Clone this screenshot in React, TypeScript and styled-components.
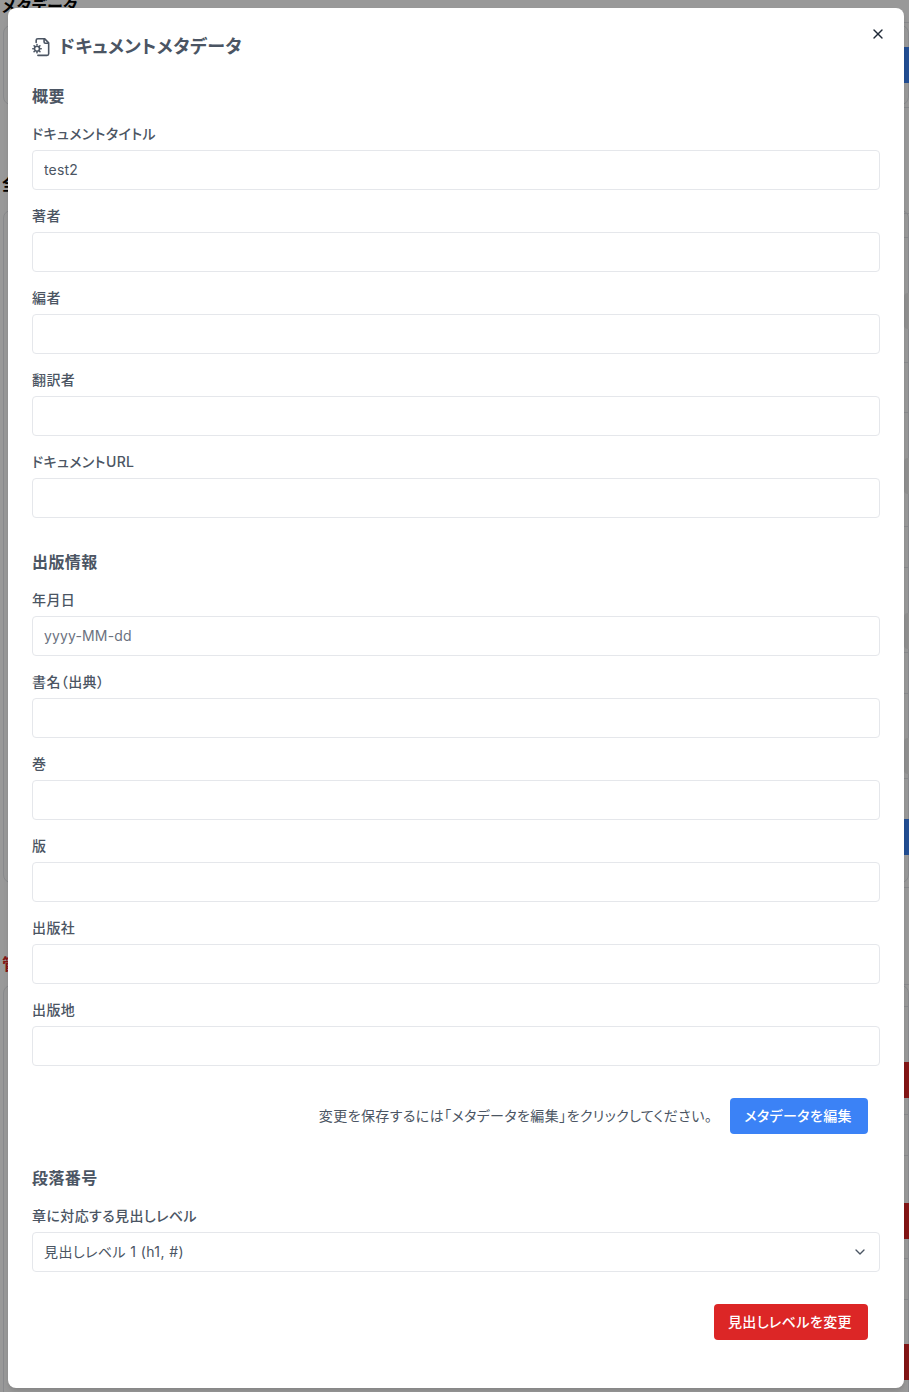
import styled, { createGlobalStyle } from 'styled-components';
import { ChevronDown, X } from 'lucide-react';

const GlobalStyle = createGlobalStyle`
  html, body {
    margin: 0;
    padding: 0;
    background: #fff;
  }
  body {
    font-family: Inter, "Noto Sans CJK JP", sans-serif;
    font-feature-settings: "palt";
    letter-spacing: 0.025em;
    overflow: hidden;
  }
  * {
    box-sizing: border-box;
  }
`;

const Page = styled.div`
  position: relative;
  width: 909px;
  height: 1392px;
  overflow: hidden;
  background: #fff;
`;

// 背面のページ（モーダルの外側に少しだけ見える部分）
const BackPage = styled.div`
  display: flex;
  flex-direction: column;
  height: 100%;
  padding: 0 0 0 3px;
`;

const BackHeading = styled.h2<{ $top: number; $danger?: boolean }>`
  flex-shrink: 0;
  margin: ${(p) => p.$top}px 0 0 -1px;
  height: 12px;
  font-size: 16px;
  line-height: 12px;
  font-weight: 700;
  color: ${(p) => (p.$danger ? '#dc2626' : '#000')};
`;

const BackCard = styled.div<{ $top: number; $height: number }>`
  flex-shrink: 0;
  margin-top: ${(p) => p.$top}px;
  height: ${(p) => p.$height}px;
  border: 1px solid #e5e7eb;
  border-radius: 8px;
`;

const BackRail = styled.div`
  position: absolute;
  top: 0;
  bottom: 0;
  right: 0;
  width: 5px;
`;

const RailLine = styled.div<{ $y: number }>`
  position: absolute;
  left: 0;
  right: 0;
  top: ${(p) => p.$y}px;
  height: 1px;
  background: #e5e7eb;
`;

const RailButton = styled.div<{ $y: number; $color: string }>`
  position: absolute;
  left: 0;
  right: 0;
  top: ${(p) => p.$y}px;
  height: 36px;
  background: ${(p) => p.$color};
`;

const RailMuted = styled.div<{ $y: number }>`
  position: absolute;
  left: 0;
  right: 0;
  top: ${(p) => p.$y}px;
  height: 36px;
  border-radius: 4px 0 0 4px;
  background: #eeeeee;
`;

const Backdrop = styled.div`
  position: absolute;
  inset: 0;
  background: rgba(0, 0, 0, 0.4);
`;

const Modal = styled.div`
  position: absolute;
  top: 8px;
  left: 8px;
  width: 896px;
  height: 1380px;
  padding: 24px;
  background: #fff;
  border-radius: 8px;
  box-shadow: 0 4px 6px -1px rgba(0, 0, 0, 0.1), 0 2px 4px -1px rgba(0, 0, 0, 0.06);
  color: #4b5563;
`;

const CloseButton = styled.button`
  position: absolute;
  top: 16px;
  right: 16px;
  width: 20px;
  height: 20px;
  padding: 0;
  display: flex;
  align-items: center;
  justify-content: center;
  border: 0;
  background: transparent;
  color: #1f2937;
`;

const Title = styled.h1`
  display: flex;
  align-items: center;
  gap: 7px;
  margin: 1px 0 23px;
  height: 28px;
  font-size: 18px;
  line-height: 28px;
  font-weight: 600;
  color: #4b5563;
`;

const Section = styled.section<{ $top?: number }>`
  display: flex;
  flex-direction: column;
  margin-top: ${(p) => p.$top ?? 0}px;
`;

const SectionTitle = styled.h2`
  margin: 0 0 16px;
  font-size: 16px;
  line-height: 24px;
  font-weight: 600;
  color: #4b5563;
`;

const Field = styled.div`
  display: flex;
  flex-direction: column;
  margin-bottom: 16px;
`;

const Label = styled.label`
  display: block;
  margin-bottom: 7px;
  font-size: 14px;
  line-height: 19px;
  font-weight: 500;
  color: #4b5563;
`;

const Input = styled.input`
  display: block;
  width: 100%;
  height: 40px;
  padding: 0 11px 1px;
  border: 1px solid #e5e7eb;
  border-radius: 4px;
  background: #fff;
  font-family: inherit;
  font-feature-settings: inherit;
  letter-spacing: 0.01em;
  font-size: 14px;
  color: #4b5563;
  outline: none;

  &::placeholder {
    color: #6b7280;
    opacity: 1;
  }
`;

const SelectBox = styled.div`
  display: flex;
  align-items: center;
  justify-content: space-between;
  height: 40px;
  padding: 0 11px;
  border: 1px solid #e5e7eb;
  border-radius: 4px;
  font-size: 14px;
  color: #4b5563;
`;

const SelectValue = styled.span`
  padding-bottom: 2px;
`;

const Actions = styled.div<{ $top: number; $bottom: number }>`
  display: flex;
  align-items: center;
  justify-content: flex-end;
  gap: 18px;
  margin: ${(p) => p.$top}px 12px ${(p) => p.$bottom}px 0;
  font-size: 14px;
  color: #4b5563;
`;

const ActionNote = styled.span`
  padding-bottom: 2px;
`;

const ActionButton = styled.button<{ $color: string }>`
  height: 36px;
  padding: 0 16px 2px 14px;
  border: 0;
  border-radius: 4px;
  background: ${(p) => p.$color};
  font-family: inherit;
  font-feature-settings: inherit;
  letter-spacing: inherit;
  font-size: 14px;
  font-weight: 500;
  color: #fff;
`;

const MetaIcon = () => (
  <svg width="20" height="20" viewBox="0 0 24 24" fill="none" stroke="currentColor" strokeWidth="1.9" strokeLinecap="round" strokeLinejoin="round">
    <path d="M5 6.5V4a2 2 0 0 1 2-2h8l5 5v13a2 2 0 0 1-2 2H7" />
    <path d="M14.5 2.5V6a1.5 1.5 0 0 0 1.5 1.5h3.5" />
    <circle cx="6" cy="14" r="3" />
    <path d="M6 9v.6M6 18.4v.6M1 14h.6M10.4 14h.6M2.5 10.5l.4.4M9.1 17.1l.4.4M2.5 17.5l.4-.4M9.1 10.9l.4-.4" />
  </svg>
);

const overview = ['ドキュメントタイトル', '著者', '編者', '翻訳者', 'ドキュメントURL'];
const publication = ['年月日', '書名（出典）', '巻', '版', '出版社', '出版地'];

const railLines = [22, 107, 213, 237, 362, 412, 526, 567, 652, 693, 778, 887, 984, 1006, 1114, 1155, 1258, 1299];

export default function App() {
  return (
    <Page>
      <GlobalStyle />
      <BackPage>
        <BackHeading $top={0}>メタデータ</BackHeading>
        <BackCard $top={13} $height={80} />
        <BackHeading $top={73}>全</BackHeading>
        <BackCard $top={20} $height={673} />
        <BackHeading $top={75} $danger>管</BackHeading>
        <BackCard $top={15} $height={420} />
      </BackPage>
      <BackRail>
        {railLines.map((y) => (
          <RailLine key={y} $y={y} />
        ))}
        <RailButton $y={47} $color="#3b82f6" />
        <RailMuted $y={293} />
        <RailMuted $y={458} />
        <RailMuted $y={613} />
        <RailMuted $y={738} />
        <RailButton $y={819} $color="#3b82f6" />
        <RailButton $y={1062} $color="#dc2626" />
        <RailButton $y={1203} $color="#dc2626" />
        <RailButton $y={1344} $color="#dc2626" />
      </BackRail>
      <Backdrop />
      <Modal>
        <CloseButton aria-label="閉じる">
          <X size={16} />
        </CloseButton>
        <Title>
          <MetaIcon />
          ドキュメントメタデータ
        </Title>
        <Section>
          <SectionTitle>概要</SectionTitle>
          {overview.map((label, i) => (
            <Field key={label}>
              <Label>{label}</Label>
              <Input defaultValue={i === 0 ? 'test2' : ''} />
            </Field>
          ))}
        </Section>
        <Section $top={16}>
          <SectionTitle>出版情報</SectionTitle>
          {publication.map((label, i) => (
            <Field key={label}>
              <Label>{label}</Label>
              <Input placeholder={i === 0 ? 'yyyy-MM-dd' : ''} />
            </Field>
          ))}
        </Section>
        <Actions $top={16} $bottom={32}>
          <ActionNote>変更を保存するには「メタデータを編集」をクリックしてください。</ActionNote>
          <ActionButton $color="#3b82f6">メタデータを編集</ActionButton>
        </Actions>
        <Section>
          <SectionTitle>段落番号</SectionTitle>
          <Field>
            <Label>章に対応する見出しレベル</Label>
            <SelectBox>
              <SelectValue>見出しレベル 1 (h1, #)</SelectValue>
              <ChevronDown size={16} />
            </SelectBox>
          </Field>
        </Section>
        <Actions $top={16} $bottom={0}>
          <ActionButton $color="#dc2626">見出しレベルを変更</ActionButton>
        </Actions>
      </Modal>
    </Page>
  );
}
